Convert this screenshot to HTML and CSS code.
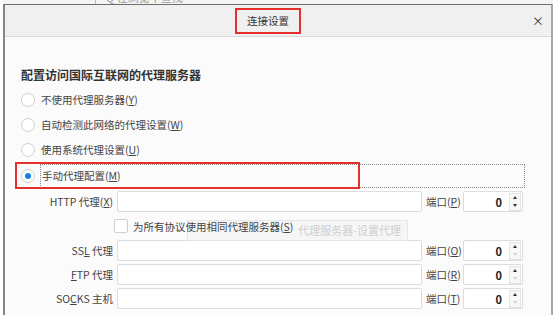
FILE: index.html
```html
<!DOCTYPE html>
<html lang="zh-CN">
<head>
    <meta charset="UTF-8">
    <title>连接设置</title>
    <link rel="stylesheet" href="styles.css">
</head>
<body>
    <div class="behind">
        <span class="behind-sep"></span>
        <span class="behind-text">Q 在浏览中查找</span>
    </div>
    <div class="dialog">
        <div class="dialog-head">
            <span class="dialog-title">连接设置</span>
            <span class="dialog-close">×</span>
        </div>
        <div class="dialog-body">
            <h2 class="group-title">配置访问国际互联网的代理服务器</h2>
            <div class="radio-row"><span class="radio"></span><span class="radio-text">不使用代理服务器(<u>Y</u>)</span></div>
            <div class="radio-row"><span class="radio"></span><span class="radio-text">自动检测此网络的代理设置(<u>W</u>)</span></div>
            <div class="radio-row"><span class="radio"></span><span class="radio-text">使用系统代理设置(<u>U</u>)</span></div>
            <div class="radio-row manual">
                <span class="radio checked"></span>
                <span class="radio-text focus">手动代理配置(<u>M</u>)</span>
                <span class="mark"></span>
            </div>
            <div class="proxy-grid">
                <label class="proxy-label">HTTP 代理(<u>X</u>)</label>
                <div class="field"></div>
                <label class="port-label">端口(<u>P</u>)</label>
                <div class="port"><span class="port-value">0</span><span class="spin"><i class="up"></i><i class="down"></i></span></div>

                <div class="share-row">
                    <span class="checkbox"></span>
                    <span class="share-text">为所有协议使用相同代理服务器(<u>S</u>)</span>
                    <span class="tip">代理服务器-设置代理</span>
                </div>

                <label class="proxy-label">SS<u>L</u> 代理</label>
                <div class="field"></div>
                <label class="port-label">端口(<u>O</u>)</label>
                <div class="port"><span class="port-value">0</span><span class="spin"><i class="up"></i><i class="down off"></i></span></div>

                <label class="proxy-label"><u>F</u>TP 代理</label>
                <div class="field"></div>
                <label class="port-label">端口(<u>R</u>)</label>
                <div class="port"><span class="port-value">0</span><span class="spin"><i class="up"></i><i class="down off"></i></span></div>

                <label class="proxy-label">SO<u>C</u>KS 主机</label>
                <div class="field"></div>
                <label class="port-label">端口(<u>T</u>)</label>
                <div class="port"><span class="port-value">0</span><span class="spin"><i class="up"></i><i class="down off"></i></span></div>
            </div>
        </div>
    </div>
</body>
</html>
```

FILE: styles.css
```css
body {
    margin: 0;
    background-color: #fff;
    font-family: "Noto Sans CJK SC", "Noto Sans", sans-serif;
    font-size: 10.5px;
    color: #444;
}
.behind {
    height: 4px;
    overflow: hidden;
    background-color: #f4f4f4;
    display: flex;
    margin-left: 3px;
    width: 550px;
}
.behind-sep {
    width: 1px;
    height: 4px;
    background-color: #bbb;
    margin-left: 92px;
}
.behind-text {
    margin: -10px 0 0 10px;
    font-size: 11px;
    line-height: 14px;
    color: #999;
}
.dialog {
    margin-left: 3px;
    width: 546px;
    height: 310px;
    border-top: 1px solid #6e6e6e;
    border-left: 2px solid #858585;
    border-right: 2px solid #a8a8a8;
    background-color: #fbfbfb;
}
.dialog-head {
    height: 31px;
    background-color: #f0f0f0;
    border-bottom: 1px solid #dadada;
    display: grid;
    grid-template-columns: 230px auto 1fr;
    align-items: center;
}
.dialog-title {
    grid-column: 2;
    border: 2px solid #e3302f;
    height: 22px;
    line-height: 22px;
    padding: 0 10px;
    font-size: 10.5px;
    color: #333;
}
.dialog-close {
    grid-column: 3;
    justify-self: end;
    margin-right: 7px;
    font-size: 12px;
    line-height: 12px;
    color: #333;
}
.dialog-body {
    padding: 30px 0 0 16px;
}
.group-title {
    margin: 0 0 4px 0;
    font-size: 12px;
    line-height: 16px;
    font-weight: bold;
    color: #333;
}
.radio-row {
    height: 25px;
    display: flex;
    align-items: center;
    position: relative;
}
.radio {
    width: 12px;
    height: 12px;
    border: 1px solid #cfcfcf;
    border-radius: 50%;
    background-color: #fff;
    margin-right: 6px;
    display: flex;
    align-items: center;
    justify-content: center;
}
.radio.checked::after {
    content: "";
    width: 6px;
    height: 6px;
    border-radius: 50%;
    background-color: #1b80d8;
}
.radio-text {
    line-height: 16px;
}
.radio-row.manual {
    height: 27px;
}
.focus {
    width: 482px;
    height: 22px;
    line-height: 22px;
    border: 1px dotted #8a8a8a;
    padding-left: 1px;
    margin-left: -1px;
}
.mark {
    position: absolute;
    left: -6px;
    top: 0;
    width: 341px;
    height: 23px;
    border: 2px solid #e3302f;
}
.proxy-grid {
    margin-top: 2px;
    display: grid;
    grid-template-columns: 96px 309px 37px 60px;
    grid-template-rows: 21px 22px 21px 21px 21px;
    row-gap: 3px;
    align-items: center;
}
.proxy-label {
    text-align: right;
    padding-right: 4px;
    color: #444;
}
.field {
    height: 19px;
    margin-right: 4px;
    border: 1px solid #dcdcdc;
    border-radius: 2px;
    background-color: #fff;
}
.port-label {
    color: #444;
}
.port {
    height: 19px;
    border: 1px solid #dcdcdc;
    border-radius: 2px;
    background-color: #fff;
    display: flex;
    align-items: center;
    justify-content: flex-end;
}
.port-value {
    font-size: 11px;
    font-weight: bold;
    color: #222;
    margin-right: 7px;
}
.spin {
    width: 10px;
    height: 16px;
    margin-right: 1px;
    border: 1px solid #e4e4e4;
    background-color: #f7f7f7;
    display: flex;
    flex-direction: column;
    align-items: center;
    justify-content: space-around;
}
.spin i {
    width: 0;
    height: 0;
    border-left: 2px solid transparent;
    border-right: 2px solid transparent;
}
.spin .up {
    border-bottom: 3px solid #333;
}
.spin .down {
    border-top: 3px solid #333;
}
.spin .down.off {
    border-top-color: #d0d0d0;
}
.share-row {
    grid-column: 1 / -1;
    height: 22px;
    padding-left: 93px;
    display: flex;
    align-items: center;
    position: relative;
}
.checkbox {
    width: 12px;
    height: 12px;
    border: 1px solid #cfcfcf;
    border-radius: 2px;
    background-color: #fff;
    margin-right: 5px;
}
.share-text {
    position: relative;
    z-index: 1;
    color: #444;
}
.tip {
    position: absolute;
    left: 166px;
    top: 5px;
    width: 213px;
    height: 19px;
    line-height: 19px;
    padding-right: 6px;
    text-align: right;
    font-size: 11px;
    color: #cfcfcf;
    background-color: rgba(244, 244, 244, 0.6);
    border: 1px solid rgba(225, 225, 225, 0.7);
}
```
